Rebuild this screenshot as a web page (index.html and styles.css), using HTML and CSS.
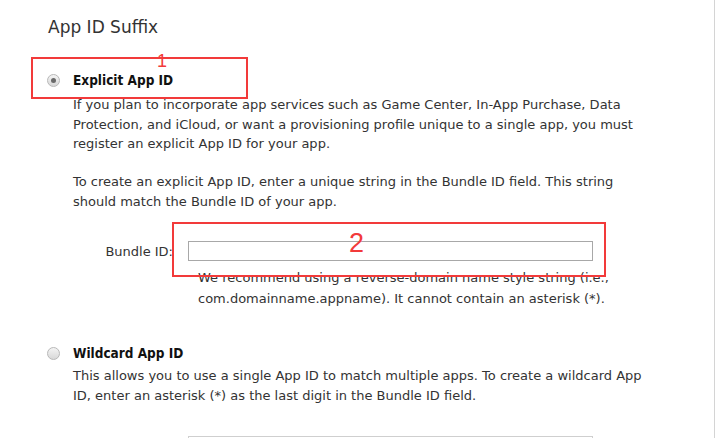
FILE: index.html
```html
<!DOCTYPE html>
<html>
<head>
<meta charset="utf-8">
<link rel="stylesheet" href="styles.css">
</head>
<body>
<div class="page">
  <h2 class="title">App ID Suffix</h2>

  <section class="option">
    <div class="option-head">
      <span class="radio checked"></span>
      <span class="option-label">Explicit App ID</span>
    </div>
    <div class="desc">
      <p>If you plan to incorporate app services such as Game Center, In-App Purchase, Data Protection, and iCloud, or want a provisioning profile unique to a single app, you must register an explicit App ID for your app.</p>
      <p>To create an explicit App ID, enter a unique string in the Bundle ID field. This string should match the Bundle ID of your app.</p>
    </div>
    <div class="field">
      <label class="field-label">Bundle ID:</label>
      <input class="field-input" type="text">
    </div>
    <p class="help">We recommend using a reverse-domain name style string (i.e., com.domainname.appname). It cannot contain an asterisk (*).</p>
  </section>

  <section class="option wild">
    <div class="option-head">
      <span class="radio"></span>
      <span class="option-label">Wildcard App ID</span>
    </div>
    <div class="desc">
      <p>This allows you to use a single App ID to match multiple apps. To create a wildcard App ID, enter an asterisk (*) as the last digit in the Bundle ID field.</p>
    </div>
    <div class="field">
      <span class="field-label"></span>
      <input class="field-input faint" type="text">
    </div>
  </section>

  <div class="mark mark1"><span class="mark-num">1</span></div>
  <div class="mark mark2"><span class="mark-num num2">2</span></div>
</div>
</body>
</html>
```

FILE: styles.css
```css
html, body {
  margin: 0;
  padding: 0;
  background: #fff;
}
body {
  font-family: "DejaVu Sans", "Liberation Sans", sans-serif;
  color: #333;
  overflow: hidden;
}
.page {
  position: relative;
  width: 714px;
  height: 438px;
  border-right: 1px solid #d4d4d4;
  overflow: hidden;
}
.title {
  margin: 0;
  padding: 16px 0 0 48px;
  font-size: 17px;
  font-weight: normal;
  color: #333;
  line-height: 22px;
}
.option {
  padding-top: 32px;
}
.option-head {
  display: flex;
  align-items: center;
  height: 20px;
  padding-left: 47px;
}
.radio {
  width: 11px;
  height: 11px;
  border-radius: 50%;
  border: 1px solid #b8b8b8;
  background: linear-gradient(#f4f4f4, #d8d8d8);
  margin-right: 13px;
  display: flex;
  align-items: center;
  justify-content: center;
  flex: none;
}
.radio.checked::after {
  content: "";
  width: 5px;
  height: 5px;
  border-radius: 50%;
  background: #6a6a6a;
}
.option-label {
  font-family: "DejaVu Sans Condensed", "DejaVu Sans", sans-serif;
  font-size: 13.5px;
  font-weight: bold;
  color: #111;
}
.desc {
  margin-top: 5px;
  margin-left: 73px;
  width: 573px;
  font-size: 13px;
  line-height: 19.5px;
}
.desc p {
  margin: 0 0 18.5px 0;
}
.desc p:last-child {
  margin-bottom: 0;
}
.field {
  display: flex;
  align-items: center;
  margin-top: 30px;
}
.field-label {
  width: 188px;
  box-sizing: border-box;
  text-align: right;
  padding-right: 15px;
  font-size: 13px;
  color: #333;
}
.field-input {
  width: 405px;
  height: 20px;
  box-sizing: border-box;
  border: 1px solid #a8a8a8;
  margin: 0;
  padding: 0;
  background: #fff;
}
.help {
  margin: 6px 0 0 198px;
  width: 440px;
  font-size: 13px;
  line-height: 21px;
}
.option.wild {
  padding-top: 34px;
}
.wild .desc {
  margin-top: 3px;
  line-height: 20px;
}
.wild .field {
  margin-top: 30px;
}
.field-input.faint {
  border-color: #cfcfcf;
}
.mark {
  position: absolute;
  border: 2.5px solid #f23a3a;
  box-sizing: border-box;
}
.mark1 {
  left: 31px;
  top: 57px;
  width: 217px;
  height: 42px;
}
.mark2 {
  left: 172px;
  top: 222px;
  width: 434px;
  height: 55px;
}
.mark-num {
  position: absolute;
  color: #f23a3a;
  font-family: "Liberation Sans", sans-serif;
}
.mark1 .mark-num {
  left: 124px;
  top: -7px;
  font-size: 18px;
  line-height: 18px;
}
.mark2 .num2 {
  left: 175px;
  top: 6px;
  font-size: 27px;
  line-height: 27px;
}
```
